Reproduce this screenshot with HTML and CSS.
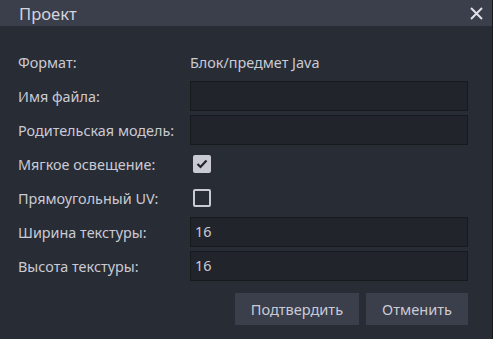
FILE: index.html
```html
<!doctype html>
<html lang="ru">
<head>
    <meta charset="UTF-8">
    <title>Проект</title>
    <link rel="stylesheet" href="styles.css">
</head>
<body>

<div class="dialog">
    <div class="dialog-title">
        <span>Проект</span>
        <svg class="close" width="13" height="13" viewBox="0 0 13 13">
            <path d="M1 1L12 12M12 1L1 12" stroke="#e0e0ea" stroke-width="2" fill="none"/>
        </svg>
    </div>

    <div class="dialog-body">
        <div class="form">
            <div class="row">
                <label>Формат:</label>
                <div class="value">Блок/предмет Java</div>
            </div>
            <div class="row">
                <label>Имя файла:</label>
                <div class="input"></div>
            </div>
            <div class="row">
                <label>Родительская модель:</label>
                <div class="input"></div>
            </div>
            <div class="row">
                <label>Мягкое освещение:</label>
                <div class="check checked">
                    <svg width="12" height="10" viewBox="0 0 12 10">
                        <path d="M1.5 5L4.5 8L10.5 1.5" stroke="#21252b" stroke-width="2.2" fill="none"/>
                    </svg>
                </div>
            </div>
            <div class="row">
                <label>Прямоугольный UV:</label>
                <div class="check"></div>
            </div>
            <div class="row">
                <label>Ширина текстуры:</label>
                <div class="input">16</div>
            </div>
            <div class="row">
                <label>Высота текстуры:</label>
                <div class="input">16</div>
            </div>
        </div>

        <div class="buttons">
            <button>Подтвердить</button>
            <button>Отменить</button>
        </div>
    </div>
</div>

</body>
</html>
```

FILE: styles.css
```css
*{margin:0;padding:0;box-sizing:border-box;}
body{
    background:#17191d;
    font-family:"Noto Sans","Open Sans",sans-serif;
    color:#cacad4;
}
.dialog{
    width:492px;
    height:339px;
    background:#282c34;
}
.dialog-title{
    height:26px;
    background:#3a3f4b;
    display:flex;
    align-items:center;
    justify-content:space-between;
    padding:0 9px 0 19px;
    font-size:16.6px;
    color:#d4d4de;
}
.dialog-body{
    padding:19px 24px 0 18px;
}
.row{
    display:grid;
    grid-template-columns:172px 1fr;
    align-items:center;
    height:34px;
    font-size:14.4px;
}
.input{
    height:30px;
    background:#21252b;
    border:1px solid #17191d;
    padding:0 4px;
    line-height:28px;
}
.check{
    width:18px;
    height:18px;
    margin-left:3px;
    border:2px solid #cacad4;
    border-radius:2px;
    display:flex;
    align-items:center;
    justify-content:center;
}
.check.checked{
    background:#cacad4;
}
.buttons{
    display:flex;
    justify-content:flex-end;
    gap:7px;
    margin-top:10px;
}
.buttons button{
    height:32px;
    padding:0 16px;
    border:none;
    background:#3a3f4b;
    color:#cacad4;
    font-family:inherit;
    font-size:14.6px;
}
```
